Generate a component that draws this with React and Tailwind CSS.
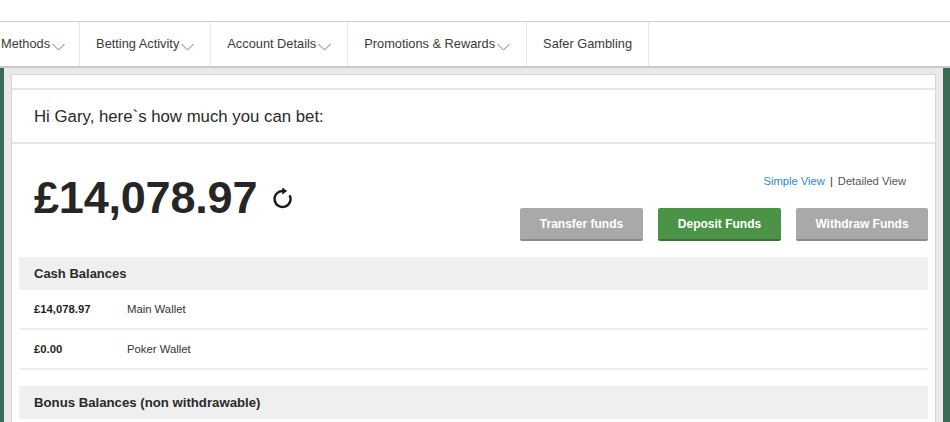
import React from 'react';

/**
 * Account balance page
 * Nav bar across the top, then a card with the balances
 */
const navItems = [
  { label: 'Methods', menu: true, first: true },
  { label: 'Betting Activity', menu: true },
  { label: 'Account Details', menu: true },
  { label: 'Promotions & Rewards', menu: true },
  { label: 'Safer Gambling', menu: false },
];

const cashRows = [
  { amount: '£14,078.97', name: 'Main Wallet' },
  { amount: '£0.00', name: 'Poker Wallet' },
];

const Chevron = () => (
  <svg width="13" height="8" viewBox="0 0 13 8" className="ml-[2px] mt-[5px]" fill="none">
    <polyline points="0.5,1 6.5,7 12.5,1" stroke="#777" strokeWidth="1" />
  </svg>
);

const RefreshIcon = () => (
  <svg width="22" height="22" viewBox="0 0 22 22" fill="none">
    {/* open circle, gap at top right */}
    <path
      d="M17.6 7.2 A8 8 0 1 1 11 3"
      stroke="#1a1a1a"
      strokeWidth="2.4"
      fill="none"
    />
    {/* arrow head */}
    <path d="M10.2 -0.6 L15.2 3 L10.2 6.6 Z" fill="#1a1a1a" />
  </svg>
);

const Button = ({ children, green, width }) => (
  <button
    className={
      (green
        ? 'bg-[#4b9447] border-[#3a7236]'
        : 'bg-[#a9a9a9] border-[#8a8a8a]') +
      ' h-[33px] rounded-[2px] border-b-2 text-white text-[12px] font-bold ' +
      width
    }
  >
    {children}
  </button>
);

const App = () => {
  return (
    <div className="w-[950px] h-[422px] overflow-hidden bg-white font-['Liberation_Sans',Arial,sans-serif] text-[#333]">
      {/* Top strip */}
      <div className="h-[21px] bg-white" />

      {/* Nav */}
      <nav className="h-[47px] flex border-t border-[#d2d2d2] border-b-2 border-b-[#c9c9c9] bg-white">
        {navItems.map((item) => (
          <div
            key={item.label}
            className={
              (item.first ? 'pl-[1px] pr-[14px]' : 'px-[16px]') +
              ' flex items-center border-r border-[#e6e6e6] text-[12.8px] text-[#3a3a3a]'
            }
          >
            <span>{item.label}</span>
            {item.menu && <Chevron />}
          </div>
        ))}
      </nav>

      {/* Body */}
      <div className="flex h-[360px]">
        <div className="w-[4px] bg-[#3d6a57]" />
        <div className="flex-1 bg-[#e9e9e9] px-[7px] pt-[6px]">
          <div className="h-full bg-white border border-[#d6d6d6]">
            <div className="h-[13px]" />
            <div className="h-[56px] flex items-center border-y-2 border-[#e6e6e6] pl-[22px] pt-[1px] text-[16.8px] text-[#2a2a2a]">
              Hi Gary, here`s how much you can bet:
            </div>

            {/* Amount + actions */}
            <div className="flex justify-between pl-[22px] pr-[7px]">
              <div className="flex items-center pt-[32px] self-start">
                <span className="text-[45px] leading-[44px] font-bold text-[#262626] tracking-[-0.2px]">
                  £14,078.97
                </span>
                <span className="ml-[15px] mt-[2px]">
                  <RefreshIcon />
                </span>
              </div>
              <div className="flex flex-col items-end pt-[30px] pb-[16px]">
                <div className="mr-[22px] text-[11.2px] leading-[14px]">
                  <span className="text-[#2a86d9]">Simple View</span>
                  <span className="mx-[5px] text-[#333]">|</span>
                  <span className="text-[#555]">Detailed View</span>
                </div>
                <div className="flex gap-[15px] mt-[20px]">
                  <Button width="w-[123px]">Transfer funds</Button>
                  <Button green width="w-[123px]">Deposit Funds</Button>
                  <Button width="w-[132px]">Withdraw Funds</Button>
                </div>
              </div>
            </div>

            {/* Balances */}
            <div className="px-[7px]">
              <div className="h-[33px] flex items-center bg-[#efefef] pl-[15px] text-[13px] font-bold text-[#2a2a2a]">
                Cash Balances
              </div>
              {cashRows.map((row) => (
                <div
                  key={row.name}
                  className="h-[40px] flex items-center border-b-2 border-[#ececec] pl-[15px] text-[11.3px]"
                >
                  <span className="w-[93px] font-bold text-[#1f1f1f]">{row.amount}</span>
                  <span className="text-[#333]">{row.name}</span>
                </div>
              ))}
              <div className="h-[33px] mt-[16px] flex items-center bg-[#efefef] pl-[15px] text-[13.2px] font-bold text-[#2a2a2a]">
                Bonus Balances (non withdrawable)
              </div>
            </div>
          </div>
        </div>
        <div className="w-[7px] bg-[#3d6a57]" />
      </div>
    </div>
  );
};

export default App;
